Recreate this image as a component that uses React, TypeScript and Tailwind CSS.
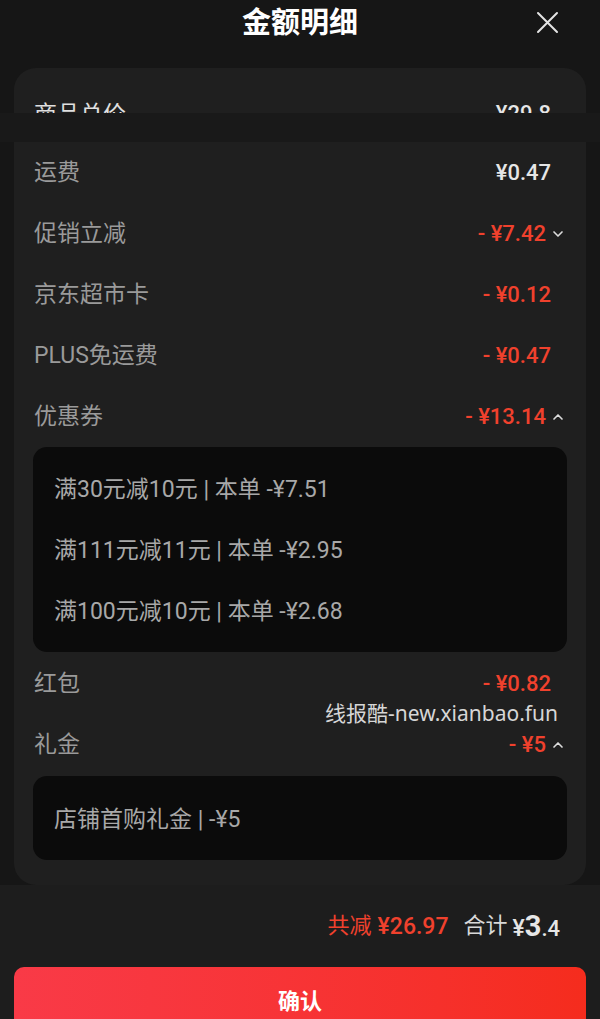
import { ChevronDown, ChevronUp } from "lucide-react";

const font = "font-['Roboto','Noto_Sans_CJK_SC',sans-serif]";

type RowProps = {
  label: string;
  value: string;
  red?: boolean;
  chevron?: "up" | "down";
};
const Row: React.FC<RowProps> = ({ label, value, red, chevron }) => {
  return (
    <div className="flex h-[61px] shrink-0 items-center justify-between pl-[20px] pr-[20px]">
      <span className="text-[23px] leading-none text-[#9a9a9a]">{label}</span>
      <div className="flex items-center">
        <span
          className={`text-[22px] leading-none font-medium ${
            red ? "text-[#f0412d]" : "text-[#e6e6e6]"
          } ${chevron ? "" : "mr-[15px]"}`}
        >
          {value}
        </span>
        {chevron === "down" && (
          <ChevronDown size={16} strokeWidth={2.5} className="ml-[4px] text-[#dcdcdc]" />
        )}
        {chevron === "up" && (
          <ChevronUp size={16} strokeWidth={2.5} className="ml-[4px] text-[#dcdcdc]" />
        )}
      </div>
    </div>
  );
};

type DetailBoxProps = {
  items: readonly string[];
  className?: string;
};
const DetailBox: React.FC<DetailBoxProps> = ({ items, className }) => {
  return (
    <div className={`mx-[19px] rounded-[14px] bg-[#0b0b0b] pb-[10px] ${className ?? "pt-[12px]"}`}>
      {items.map((item, i) => (
        <div key={i} className="flex h-[61px] items-center pl-[21px] text-[23px] leading-none text-[#a8a8a8]">
          {item}
        </div>
      ))}
    </div>
  );
};

export default function App() {
  const coupons = [
    "满30元减10元 | 本单 -¥7.51",
    "满111元减11元 | 本单 -¥2.95",
    "满100元减10元 | 本单 -¥2.68",
  ] as const;

  return (
    <div className={`flex h-[1019px] w-[600px] flex-col overflow-hidden bg-[#161616] ${font}`}>
      <header className="relative flex h-[46px] shrink-0 items-center justify-center">
        <h1 className="text-[29px] leading-none font-bold text-white">金额明细</h1>
        <svg
          className="absolute top-[11px] right-[41px]"
          width="23"
          height="23"
          viewBox="0 0 23 23"
          fill="none"
          stroke="#e4e4e4"
          strokeWidth="2"
          strokeLinecap="round"
        >
          <path d="M2 2L21 21M21 2L2 21" />
        </svg>
      </header>

      {/* top of the card, cut off where the screenshot was stitched */}
      <div className="mt-[22px] mx-[14px] h-[45px] shrink-0 overflow-hidden rounded-t-[22px] bg-[#1f1f1f]">
        <div className="flex items-start justify-between pt-[35px] pl-[20px] pr-[35px]">
          <span className="text-[23px] leading-none text-[#e0e0e0]">商品总价</span>
          <span className="text-[22px] leading-none font-medium text-[#e6e6e6]">¥29.8</span>
        </div>
      </div>
      <div className="h-[29px] shrink-0 bg-[#191919]" />

      <div className="relative mx-[14px] shrink-0 rounded-b-[22px] bg-[#1f1f1f] pb-[25px]">
        <Row label="运费" value="¥0.47" />
        <Row label="促销立减" value="- ¥7.42" red chevron="down" />
        <Row label="京东超市卡" value="- ¥0.12" red />
        <Row label="PLUS免运费" value="- ¥0.47" red />
        <Row label="优惠券" value="- ¥13.14" red chevron="up" />
        <DetailBox items={coupons} />
        <div className="mt-[1px]">
          <Row label="红包" value="- ¥0.82" red />
          <Row label="礼金" value="- ¥5" red chevron="up" />
        </div>
        <DetailBox items={["店铺首购礼金 | -¥5"]} className="mt-[1px] pt-[13px]" />
        <span className="absolute top-[561px] left-[311px] text-[21px] leading-none text-[#d6d6d6] font-['Noto_Sans','Noto_Sans_CJK_SC',sans-serif]">
          线报酷-new.xianbao.fun
        </span>
      </div>

      <div className="flex shrink-0 flex-col bg-[#1d1d1d]">
        <div className="flex h-[82px] items-center justify-end pr-[40px]">
          <span className="text-[22px] leading-none text-[#f0412d]">共减</span>
          <span className="ml-[6px] text-[23px] leading-none font-medium text-[#f0412d]">¥26.97</span>
          <span className="ml-[15px] text-[22px] leading-none text-[#d8d8d8]">合计</span>
          <span className="ml-[5px] flex items-baseline leading-none text-[#e6e6e6]">
            <span className="text-[23px] font-medium">¥</span>
            <span className="text-[29px] font-bold">3</span>
            <span className="text-[22px] font-medium">.4</span>
          </span>
        </div>
        <button className="mx-[14px] flex h-[70px] shrink-0 items-center justify-center rounded-[10px] bg-gradient-to-r from-[#f93a47] to-[#f52c1d]">
          <span className="text-[22px] leading-none font-bold text-white">确认</span>
        </button>
      </div>
    </div>
  );
}
